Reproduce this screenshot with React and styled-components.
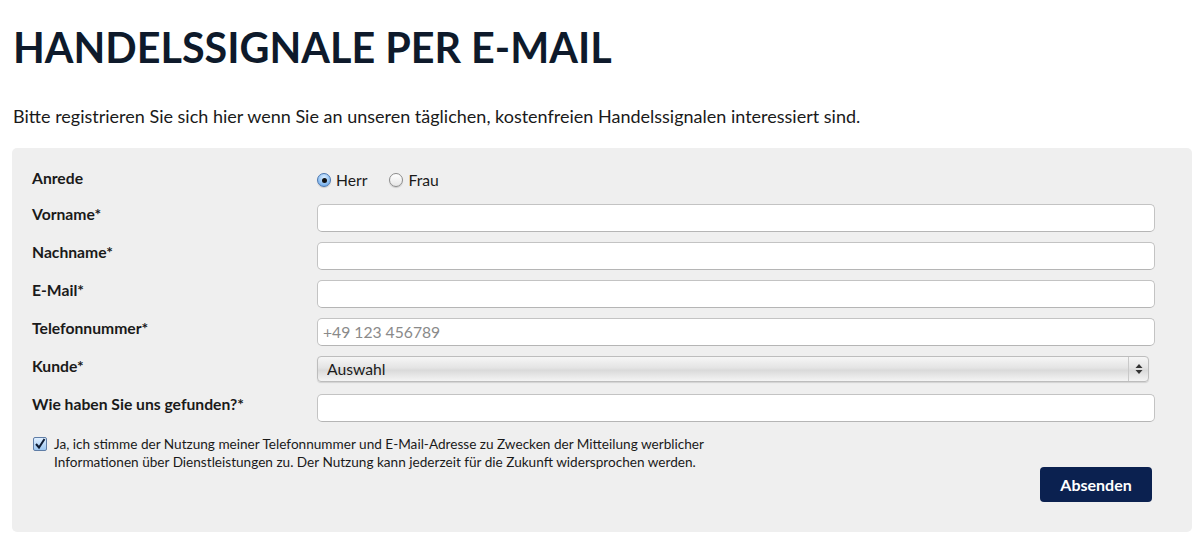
import React from 'react';
import styled, { createGlobalStyle } from 'styled-components';

const GlobalStyle = createGlobalStyle`
  body {
    margin: 0;
    background: #ffffff;
    font-family: Lato, "Open Sans", sans-serif;
    color: #1c1c1c;
  }
`;

const Page = styled.main`
  padding: 0 6px 0 12px;
`;

const Title = styled.h1`
  margin: 0;
  padding: 22px 0 0 1px;
  font-size: 41.3px;
  line-height: 50px;
  font-weight: 700;
  color: #0e1a2b;
`;

const Intro = styled.p`
  margin: 33px 0 21px 1px;
  font-size: 18px;
  line-height: 22px;
  color: #1a1a1a;
`;

const Panel = styled.form`
  background: #efefef;
  border-radius: 5px;
  padding: 20px 37px 30px 20px;
`;

const Row = styled.div`
  display: grid;
  grid-template-columns: 285px 1fr;
  align-items: start;
  min-height: ${p => p.$h || 38}px;
`;

const Label = styled.label`
  font-size: 15.7px;
  font-weight: 700;
  color: #1a1a1a;
  line-height: 20px;
`;

const RadioGroup = styled.div`
  display: flex;
  align-items: center;
  gap: 22px;
  padding-top: 3px;
`;

const RadioOption = styled.span`
  display: inline-flex;
  align-items: center;
  gap: 5px;
  font-size: 15.7px;
  color: #1a1a1a;
`;

const RadioDot = styled.span`
  width: 14px;
  height: 14px;
  border-radius: 50%;
  box-sizing: border-box;
  display: inline-flex;
  align-items: center;
  justify-content: center;
  border: 1px solid ${p => (p.$on ? '#4a76b0' : '#8b8b8b')};
  background: ${p =>
    p.$on
      ? 'radial-gradient(circle at 50% 30%, #d8ecff 0%, #8fc0f2 60%, #5d9be0 100%)'
      : 'linear-gradient(#ffffff, #e6e6e6)'};
  box-shadow: 0 1px 1px rgba(0, 0, 0, 0.15);
  &::after {
    content: '';
    display: ${p => (p.$on ? 'block' : 'none')};
    width: 5px;
    height: 5px;
    border-radius: 50%;
    background: #111;
  }
`;

const Input = styled.input`
  box-sizing: border-box;
  width: 100%;
  height: 28px;
  border: 1px solid #c3c3c3;
  border-bottom-color: #b5b5b5;
  border-radius: 5px;
  background: #ffffff;
  padding: 0 5px;
  font-family: Lato, sans-serif;
  font-size: 15.7px;
  color: #1a1a1a;
  outline: none;
  &::placeholder {
    color: #8a8a8a;
  }
`;

const SelectWrap = styled.div`
  position: relative;
  width: calc(100% - 6px);
`;

const Select = styled.select`
  appearance: none;
  -webkit-appearance: none;
  box-sizing: border-box;
  width: 100%;
  height: 26px;
  border: 1px solid #bdbdbd;
  border-radius: 4px;
  background: linear-gradient(#f6f6f6 0%, #e4e4e4 45%, #dadada 55%, #f4f4f4 100%);
  box-shadow: 0 1px 1px rgba(0, 0, 0, 0.12);
  padding: 0 30px 0 9px;
  font-family: Lato, sans-serif;
  font-size: 15.7px;
  color: #1a1a1a;
  outline: none;
`;

const Arrows = styled.span`
  position: absolute;
  top: 1px;
  right: 1px;
  bottom: 1px;
  width: 19px;
  border-left: 1px solid #c9c9c9;
  display: flex;
  align-items: center;
  justify-content: center;
  pointer-events: none;
`;

const Consent = styled.div`
  display: flex;
  align-items: flex-start;
  gap: 7px;
  margin: 13px 0 0 1px;
`;

const CheckBox = styled.span`
  flex: none;
  box-sizing: border-box;
  width: 14px;
  height: 14px;
  margin-top: 2px;
  border: 1px solid #5f7da6;
  border-radius: 2px;
  background: linear-gradient(#e0efff, #9cc6f0);
  display: flex;
  align-items: center;
  justify-content: center;
`;

const ConsentText = styled.p`
  margin: 0;
  font-size: 13.6px;
  line-height: 18px;
  color: #1a1a1a;
  max-width: 720px;
`;

const Actions = styled.div`
  display: flex;
  justify-content: flex-end;
  padding-right: 3px;
  margin-top: -4px;
`;

const SubmitButton = styled.button`
  width: 112px;
  height: 35px;
  border: none;
  border-radius: 4px;
  background: #0b2150;
  color: #ffffff;
  font-family: Lato, sans-serif;
  font-weight: 700;
  font-size: 16px;
  cursor: pointer;
`;

const fields = [
  { label: 'Vorname*' },
  { label: 'Nachname*' },
  { label: 'E-Mail*' },
  { label: 'Telefonnummer*', placeholder: '+49 123 456789' },
];

export default function App() {
  return (
    <>
      <GlobalStyle />
      <Page>
        <Title>HANDELSSIGNALE PER E-MAIL</Title>
        <Intro>
          Bitte registrieren Sie sich hier wenn Sie an unseren täglichen, kostenfreien Handelssignalen interessiert sind.
        </Intro>
        <Panel onSubmit={e => e.preventDefault()}>
          <Row $h={36}>
            <Label>Anrede</Label>
            <RadioGroup>
              <RadioOption><RadioDot $on />Herr</RadioOption>
              <RadioOption><RadioDot />Frau</RadioOption>
            </RadioGroup>
          </Row>
          {fields.map(f => (
            <Row key={f.label}>
              <Label>{f.label}</Label>
              <Input placeholder={f.placeholder} />
            </Row>
          ))}
          <Row>
            <Label>Kunde*</Label>
            <SelectWrap>
              <Select defaultValue="">
                <option value="">Auswahl</option>
              </Select>
              <Arrows>
                <svg width="8" height="12" viewBox="0 0 8 12">
                  <path d="M4 1 L7.5 5 L0.5 5 Z" fill="#333" />
                  <path d="M4 11 L7.5 7 L0.5 7 Z" fill="#333" />
                </svg>
              </Arrows>
            </SelectWrap>
          </Row>
          <Row $h={28}>
            <Label>Wie haben Sie uns gefunden?*</Label>
            <Input />
          </Row>
          <Consent>
            <CheckBox>
              <svg width="12" height="12" viewBox="0 0 12 12">
                <path d="M2 6 L5 9.5 L10.5 1" fill="none" stroke="#0d1b33" strokeWidth="2" />
              </svg>
            </CheckBox>
            <ConsentText>
              Ja, ich stimme der Nutzung meiner Telefonnummer und E-Mail-Adresse zu Zwecken der Mitteilung werblicher<br />
              Informationen über Dienstleistungen zu. Der Nutzung kann jederzeit für die Zukunft widersprochen werden.
            </ConsentText>
          </Consent>
          <Actions>
            <SubmitButton type="submit">Absenden</SubmitButton>
          </Actions>
        </Panel>
      </Page>
    </>
  );
}
